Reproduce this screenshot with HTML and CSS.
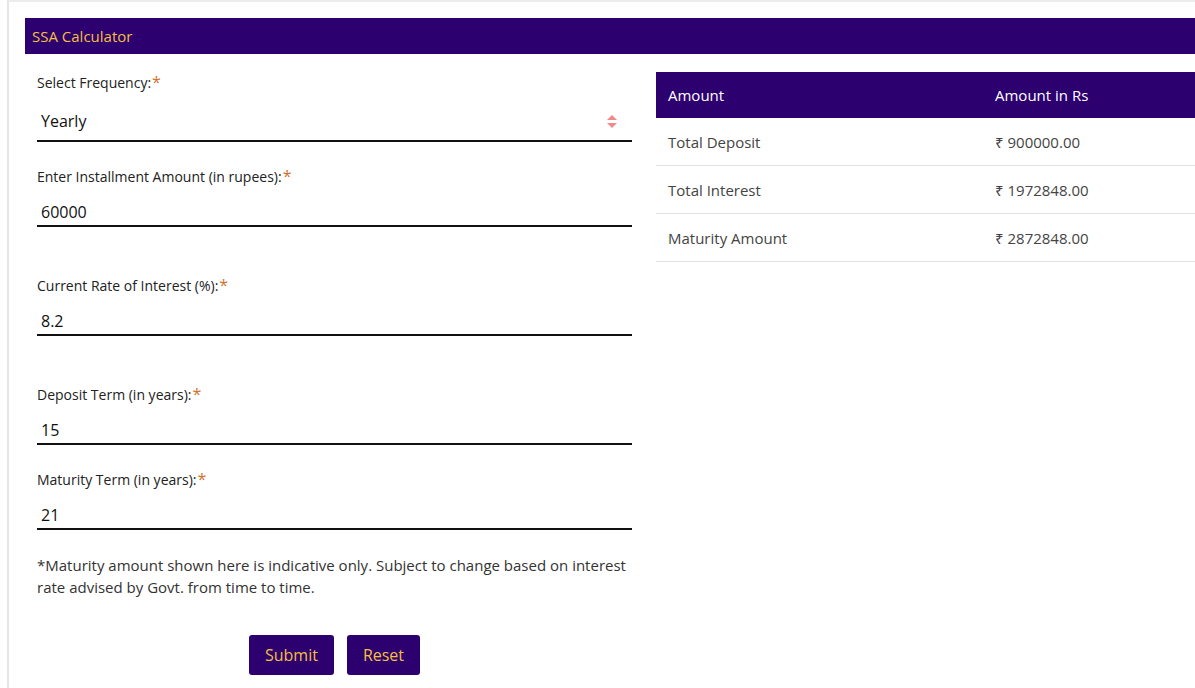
FILE: index.html
```html
<!DOCTYPE html>
<html lang="en">
<head>
    <meta charset="UTF-8">
    <meta name="viewport" content="width=device-width, initial-scale=1.0">
    <title>SSA Calculator</title>
    <link rel="stylesheet" href="styles.css">
</head>
<body>
    <div class="page">
        <div class="panel-title">SSA Calculator</div>

        <div class="calc">
            <form class="calc-form" onsubmit="return false;">
                <div class="field field-select">
                    <label>Select Frequency:<span class="req">*</span></label>
                    <div class="select-wrap">
                        <select class="input">
                            <option>Yearly</option>
                            <option>Monthly</option>
                        </select>
                        <svg class="select-arrows" width="10" height="14" viewBox="0 0 10 14">
                            <path d="M5 0 L10 5 L0 5 Z" fill="#f08a8a"/>
                            <path d="M0 8 L10 8 L5 13 Z" fill="#f08a8a"/>
                        </svg>
                    </div>
                </div>

                <div class="field field-tall">
                    <label>Enter Installment Amount (in rupees):<span class="req">*</span></label>
                    <input class="input" type="text" value="60000">
                </div>

                <div class="field field-tall">
                    <label>Current Rate of Interest (%):<span class="req">*</span></label>
                    <input class="input" type="text" value="8.2">
                </div>

                <div class="field">
                    <label>Deposit Term (in years):<span class="req">*</span></label>
                    <input class="input" type="text" value="15">
                </div>

                <div class="field field-last">
                    <label>Maturity Term (in years):<span class="req">*</span></label>
                    <input class="input" type="text" value="21">
                </div>

                <p class="note">*Maturity amount shown here is indicative only. Subject to change based on interest rate advised by Govt. from time to time.</p>

                <div class="actions">
                    <button class="btn" type="submit">Submit</button>
                    <button class="btn" type="reset">Reset</button>
                </div>
            </form>

            <div class="result">
                <table class="result-table">
                    <thead>
                        <tr>
                            <th>Amount</th>
                            <th>Amount in Rs</th>
                        </tr>
                    </thead>
                    <tbody>
                        <tr>
                            <td>Total Deposit</td>
                            <td>&#8377; 900000.00</td>
                        </tr>
                        <tr>
                            <td>Total Interest</td>
                            <td>&#8377; 1972848.00</td>
                        </tr>
                        <tr>
                            <td>Maturity Amount</td>
                            <td>&#8377; 2872848.00</td>
                        </tr>
                    </tbody>
                </table>
            </div>
        </div>
    </div>
</body>
</html>
```

FILE: styles.css
```css
body {
    margin: 0;
    font-family: 'Open Sans', 'Noto Sans', sans-serif;
    color: #222;
    background: #fff;
    overflow: hidden;
}
.page {
    margin-left: 7px;
    border-left: 2px solid #e6e6e6;
    border-top: 2px solid #ececec;
    padding: 16px 0 0 16px;
    min-height: 700px;
}
.panel-title {
    background: #2c006f;
    color: #f5bf3f;
    font-size: 15px;
    line-height: 37px;
    height: 36px;
    padding-left: 7px;
}
.calc {
    display: flex;
    gap: 24px;
    padding-top: 18px;
}
.calc-form {
    width: 595px;
    flex: none;
    padding-left: 12px;
    margin-top: 2px;
}
.field {
    margin-bottom: 26px;
}
.field-tall {
    margin-bottom: 50px;
}
.field-last {
    margin-bottom: 24px;
}
.field label {
    display: block;
    font-size: 14px;
    line-height: 18px;
    color: #222;
    margin-bottom: 12px;
}
.req {
    color: #d0722e;
    font-size: 16px;
    line-height: 10px;
    margin-left: 1px;
}
.input {
    display: block;
    width: 100%;
    box-sizing: border-box;
    height: 29px;
    border: none;
    border-bottom: 2px solid #111;
    padding: 0 4px;
    font-family: inherit;
    font-size: 16px;
    color: #111;
    background: transparent;
    outline: none;
}
.field-select label {
    margin-bottom: 10px;
}
.select-wrap {
    position: relative;
}
.select-wrap .input {
    height: 40px;
    appearance: none;
    -webkit-appearance: none;
}
.select-arrows {
    position: absolute;
    right: 15px;
    top: 13px;
    pointer-events: none;
}
.note {
    font-size: 15px;
    line-height: 22px;
    color: #333;
    margin: 0 0 37px;
}
.actions {
    display: flex;
    justify-content: center;
    gap: 13px;
}
.btn {
    background: #2c006f;
    color: #f5bf3f;
    border: none;
    border-radius: 3px;
    height: 40px;
    padding: 0 16px;
    font-family: inherit;
    font-size: 16px;
    cursor: pointer;
}
.result {
    flex: 1;
}
.result-table {
    width: 100%;
    table-layout: fixed;
    border-collapse: collapse;
    font-size: 15px;
}
.result-table th {
    background: #2c006f;
    color: #fff;
    font-weight: normal;
    text-align: left;
    height: 46px;
    padding: 0 12px;
}
.result-table th:first-child {
    width: 303px;
}
.result-table td {
    color: #444;
    height: 47px;
    padding: 0 12px;
    border-bottom: 1px solid #e2e2e2;
}
```
